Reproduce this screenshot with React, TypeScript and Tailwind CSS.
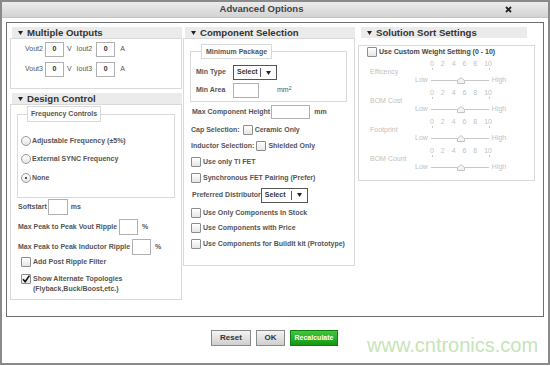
import React from 'react';

const Tri = () => (
  <svg width="5" height="4" viewBox="0 0 5 4" className="mr-[4px] shrink-0">
    <path d="M0 0H5L2.5 4Z" fill="#222" />
  </svg>
);

const Header: React.FC<{ title: string; className?: string }> = ({ title, className = '' }) => (
  <div
    className={`flex h-[11px] items-center bg-[#ebebeb] pl-[6px] text-[9.6px] font-bold leading-none text-[#333] ${className}`}
  >
    <Tri />
    {title}
  </div>
);

const Field: React.FC<{ w: string; h?: string; children?: React.ReactNode; className?: string }> = ({
  w,
  h = 'h-[15px]',
  children,
  className = '',
}) => (
  <div
    className={`flex shrink-0 items-center justify-center border border-[#b0b0b0] bg-white text-[7px] font-bold text-[#333] ${w} ${h} ${className}`}
  >
    {children}
  </div>
);

const Check: React.FC<{ checked?: boolean; className?: string }> = ({ checked, className = '' }) => (
  <div
    className={`relative h-[10px] w-[10px] shrink-0 rounded-[1px] border border-[#8c8c8c] bg-linear-to-b from-white to-[#e6e6e6] ${className}`}
  >
    {checked && (
      <svg width="10" height="10" viewBox="0 0 10 10" className="absolute -top-[1px] -left-[1px]">
        <path d="M2 5.2L4.2 7.6L8.4 1.6" stroke="#111" strokeWidth="1.6" fill="none" />
      </svg>
    )}
  </div>
);

const Radio: React.FC<{ checked?: boolean }> = ({ checked }) => (
  <div className="flex h-[10px] w-[10px] shrink-0 items-center justify-center rounded-full border border-[#9a9a9a] bg-linear-to-b from-white to-[#e4e4e4]">
    {checked && <div className="h-[2px] w-[2px] rounded-full bg-[#222]" />}
  </div>
);

const Select: React.FC<{ w: string }> = ({ w }) => (
  <div className={`flex h-[15px] shrink-0 items-center border border-[#555] bg-white text-[7px] font-bold text-[#333] ${w}`}>
    <span className="ml-[3px] flex-1">Select</span>
    <div className="h-[9px] w-px bg-[#555]" />
    <svg width="5" height="4" viewBox="0 0 5 4" className="mx-[5px]">
      <path d="M0 0H5L2.5 4Z" fill="#222" />
    </svg>
  </div>
);

const CheckRow: React.FC<{ label: string; className?: string; checked?: boolean }> = ({
  label,
  className = '',
  checked,
}) => (
  <div className={`flex h-[10px] items-center ${className}`}>
    <Check checked={checked} />
    <span className="ml-[2px]">{label}</span>
  </div>
);

const OutRow: React.FC<{ n: string; className?: string }> = ({ n, className = '' }) => (
  <div className={`flex h-[15px] items-center text-[7px] text-[#555] ${className}`}>
    <span>Vout{n}</span>
    <Field w="w-[19px]" className="ml-[2px]">
      0
    </Field>
    <span className="ml-[3px]">V</span>
    <span className="ml-[5px]">Iout{n}</span>
    <Field w="w-[19px]" className="ml-[4px]">
      0
    </Field>
    <span className="ml-[5px]">A</span>
  </div>
);

const Thumb = () => (
  <svg width="8" height="7" viewBox="0 0 8 7" className="absolute -top-[3px] left-[26px]">
    <path d="M4 0.5L7.5 3.5V6.5H0.5V3.5Z" fill="#f3f3f3" stroke="#c4c4c4" />
  </svg>
);

const Weight: React.FC<{ label: string }> = ({ label }) => (
  <div className="flex h-[29px] text-[7px] text-[#c2c2c2]">
    <div className="flex h-[24px] w-[56px] items-center pl-[11px]">{label}</div>
    <div className="flex flex-col">
      <div className="ml-[15px] flex h-[8px] w-[62px] items-center justify-between">
        <span>0</span>
        <span>2</span>
        <span>4</span>
        <span>6</span>
        <span>8</span>
        <span>10</span>
      </div>
      <div className="ml-[17px] flex h-[8px] w-[58px] items-start justify-between">
        <div className="h-[2px] w-px bg-[#c8c8c8]" />
        <div className="h-[2px] w-px bg-[#c8c8c8]" />
      </div>
      <div className="flex h-[8px] items-center">
        <span>Low</span>
        <div className="relative ml-[3px] h-px w-[58px] bg-[#c8c8c8]">
          <Thumb />
        </div>
        <span className="ml-[3px]">High</span>
      </div>
    </div>
  </div>
);

export default function App() {
  return (
    <div className="relative h-[366px] w-[550px] overflow-hidden bg-white font-['Liberation_Sans',Arial,sans-serif]">
      <div className="flex h-[365px] w-[550px] flex-col border-2 border-[#8a8a8a]">
        <div className="relative flex h-[16px] shrink-0 items-center justify-center border-b border-[#c4c4c4] bg-linear-to-b from-[#ececec] to-[#d3d3d3] pr-[27px] text-[9.5px] font-bold text-[#444]">
          Advanced Options
          <svg width="7" height="7" viewBox="0 0 7 7" className="absolute top-[4px] right-[36px]">
            <path d="M1 1L6 6M6 1L1 6" stroke="#222" strokeWidth="1.8" />
          </svg>
        </div>

        <div className="mt-[4px] ml-[4px] h-[295px] w-[538px] shrink-0 border border-[#6e6e6e] pt-[4px] pl-[3px]">
          <div className="flex">
            {/* column 1 */}
            <div className="w-[172px]">
              <Header title="Multiple Outputs" className="ml-[2px]" />
              <div className="h-[51px] border border-[#d9d9d9] pt-[3px] pl-[14px]">
                <OutRow n="2" />
                <OutRow n="3" className="mt-[5px]" />
              </div>
              <Header title="Design Control" className="mt-[4px] ml-[2px]" />
              <div className="h-[196px] border border-[#d9d9d9] text-[7px] font-bold text-[#555]">
                <fieldset className="mt-[1px] ml-[6px] w-[158px] border border-[#d9d9d9] pb-[14px] pl-[3px]">
                  <legend className="ml-[6px] h-[16px] border border-[#d9d9d9] bg-white px-[3px] leading-[14px]">
                    Frequency Controls
                  </legend>
                  <div className="mt-[14px] flex h-[10px] items-center">
                    <Radio />
                    <span className="ml-[1px]">Adjustable Frequency (±5%)</span>
                  </div>
                  <div className="mt-[8px] flex h-[10px] items-center">
                    <Radio />
                    <span className="ml-[1px]">External SYNC Frequency</span>
                  </div>
                  <div className="mt-[9px] flex h-[10px] items-center">
                    <Radio checked />
                    <span className="ml-[1px]">None</span>
                  </div>
                </fieldset>
                <div className="mt-[1px] flex h-[16px] items-center pl-[7px]">
                  <span>Softstart</span>
                  <Field w="w-[20px]" h="h-[16px]" className="ml-[1px]" />
                  <span className="ml-[3px]">ms</span>
                </div>
                <div className="mt-[4px] flex h-[16px] items-center pl-[7px]">
                  <span>Max Peak to Peak Vout Ripple</span>
                  <Field w="w-[19px]" h="h-[16px]" className="ml-[2px]" />
                  <span className="ml-[4px]">%</span>
                </div>
                <div className="mt-[4px] flex h-[16px] items-center pl-[7px]">
                  <span>Max Peak to Peak Inductor Ripple</span>
                  <Field w="w-[19px]" h="h-[16px]" className="ml-[2px]" />
                  <span className="ml-[4px]">%</span>
                </div>
                <CheckRow label="Add Post Ripple Filter" className="mt-[2px] pl-[10px]" />
                <div className="mt-[7px] flex items-start pl-[10px] leading-[10px]">
                  <Check checked />
                  <span className="ml-[2px]">
                    Show Alternate Topologies
                    <br />
                    (Flyback,Buck/Boost,etc.)
                  </span>
                </div>
              </div>
            </div>

            {/* column 2 */}
            <div className="ml-[1px] w-[172px]">
              <Header title="Component Selection" className="ml-[2px]" />
              <div className="h-[228px] border border-[#d9d9d9] text-[7px] font-bold text-[#555]">
                <fieldset className="mt-[5px] ml-[6px] w-[157px] border border-[#d9d9d9] pb-[3px] pl-[5px]">
                  <legend className="ml-[5px] h-[15px] border border-[#d9d9d9] bg-white px-[4px] leading-[13px]">
                    Minimum Package
                  </legend>
                  <div className="mt-[6px] flex h-[15px] items-center">
                    <span className="w-[37px]">Min Type</span>
                    <Select w="w-[44px]" />
                  </div>
                  <div className="mt-[3px] flex h-[15px] items-center">
                    <span className="w-[37px]">Min Area</span>
                    <Field w="w-[26px]" />
                    <span className="ml-[18px] font-normal">
                      mm<sup className="text-[5px]">2</sup>
                    </span>
                  </div>
                </fieldset>
                <div className="mt-[3px] flex h-[14px] items-center pl-[8px]">
                  <span>Max Component Height</span>
                  <Field w="w-[39px]" h="h-[14px]" className="ml-[1px]" />
                  <span className="ml-[4px]">mm</span>
                </div>
                <div className="mt-[6px] flex h-[10px] items-center pl-[7px]">
                  <span>Cap Selection:</span>
                  <Check className="ml-[3px]" />
                  <span className="ml-[2px]">Ceramic Only</span>
                </div>
                <div className="mt-[6px] flex h-[10px] items-center pl-[7px]">
                  <span>Inductor Selection:</span>
                  <Check className="ml-[2px]" />
                  <span className="ml-[2px]">Shielded Only</span>
                </div>
                <CheckRow label="Use only TI FET" className="mt-[6px] pl-[7px]" />
                <CheckRow label="Synchronous FET Pairing (Prefer)" className="mt-[6px] pl-[7px]" />
                <div className="mt-[5px] flex h-[14px] items-center pl-[8px]">
                  <span>Preferred Distributor</span>
                  <Select w="w-[47px]" />
                </div>
                <CheckRow label="Use Only Components In Stock" className="mt-[6px] pl-[7px]" />
                <CheckRow label="Use Components with Price" className="mt-[5px] pl-[7px]" />
                <CheckRow label="Use Components for BuildIt kit (Prototype)" className="mt-[6px] pl-[7px]" />
              </div>
            </div>

            {/* column 3 */}
            <div className="ml-[3px] w-[177px]">
              <Header title="Solution Sort Settings" className="mr-[8px] ml-[3px]" />
              <div className="mt-[7px] h-[136px] border border-[#d9d9d9]">
                <CheckRow
                  label="Use Custom Weight Setting (0 - 10)"
                  className="mt-[1px] pl-[8px] text-[7px] font-bold text-[#444]"
                />
                <div className="mt-[3px]">
                  <Weight label="Efficency" />
                  <Weight label="BOM Cost" />
                  <Weight label="Footprint" />
                  <Weight label="BOM Count" />
                </div>
              </div>
            </div>
          </div>
        </div>

        <div className="mt-[13px] flex justify-center gap-[5px] pr-[1px] text-[8px] font-bold">
          <button className="h-[16px] w-[40px] border border-[#8a8a8a] bg-linear-to-b from-[#f4f4f4] to-[#cfcfcf] text-[#333]">
            Reset
          </button>
          <button className="h-[16px] w-[29px] border border-[#8a8a8a] bg-linear-to-b from-[#f4f4f4] to-[#cfcfcf] text-[#333]">
            OK
          </button>
          <button className="h-[16px] w-[48px] border border-[#0f7f0f] bg-linear-to-b from-[#40c640] to-[#129812] text-[7px] text-white">
            Recalculate
          </button>
        </div>
      </div>

      <div className="pointer-events-none absolute top-[335px] left-[367px] text-[20px] leading-none text-[#c6e4b8]">
        www.cntronics.com
      </div>
    </div>
  );
}
